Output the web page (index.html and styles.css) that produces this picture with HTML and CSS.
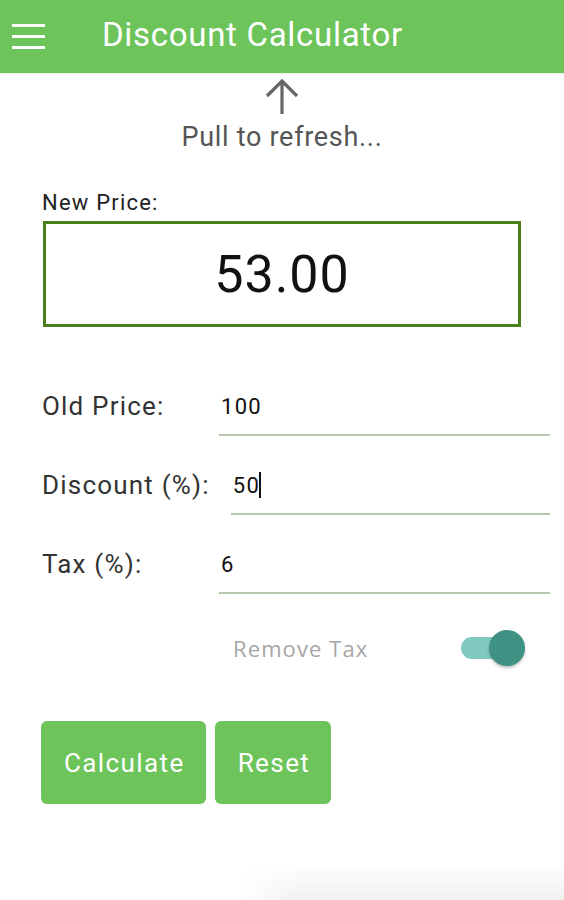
FILE: index.html
```html
<!DOCTYPE html>
<html lang="en">
<head>
  <meta charset="UTF-8" />
  <meta name="viewport" content="width=device-width, initial-scale=1.0"/>
  <title>Discount Calculator</title>
  <link rel="stylesheet" href="styles.css">
</head>
<body>

  <header class="toolbar">
    <div class="menu">
      <span></span><span></span><span></span>
    </div>
    <h1>Discount Calculator</h1>
  </header>

  <div class="refresh">
    <svg width="40" height="38" viewBox="0 0 40 38">
      <path d="M20 36 V4 M5 18 L20 3 L35 18" fill="none" stroke="#666" stroke-width="3.2"/>
    </svg>
    <div class="refresh-text">Pull to refresh...</div>
  </div>

  <main class="calc">
    <div class="result-label">New Price:</div>
    <div class="result">53.00</div>

    <div class="inputs">
      <div class="row">
        <span class="label">Old Price:</span>
        <span class="field">100</span>
      </div>
      <div class="row">
        <span class="label">Discount (%):</span>
        <span class="field"><span>50</span><span class="caret"></span></span>
      </div>
      <div class="row">
        <span class="label">Tax (%):</span>
        <span class="field">6</span>
      </div>
    </div>

    <div class="tax-row">
      <span class="tax-label">Remove Tax</span>
      <span class="switch"><span class="thumb"></span></span>
    </div>

    <div class="actions">
      <button>Calculate</button>
      <button>Reset</button>
    </div>
  </main>

  <div class="shade"></div>

</body>
</html>
```

FILE: styles.css
```css
body {
  font-family: Roboto, "Liberation Sans", sans-serif;
  background: #fff;
  margin: 0;
  width: 564px;
  height: 900px;
  overflow: hidden;
  display: flex;
  flex-direction: column;
}
.toolbar {
  height: 73px;
  flex-shrink: 0;
  background: #6cc45a;
  display: flex;
  align-items: center;
  box-shadow: 0 1px 1px rgba(0,0,0,0.08);
}
.menu {
  width: 33px;
  margin-left: 12px;
  display: flex;
  flex-direction: column;
  gap: 8px;
}
.menu span {
  height: 3px;
  background: #fff;
}
.toolbar h1 {
  margin: 0 0 0 57px;
  font-size: 33px;
  letter-spacing: 0.7px;
  font-weight: 400;
  color: #fff;
  padding-bottom: 4px;
}
.refresh {
  display: flex;
  flex-direction: column;
  align-items: center;
  padding-top: 5px;
}
.refresh svg {
  display: block;
}
.refresh-text {
  font-size: 27px;
  letter-spacing: 0.7px;
  color: #555;
  margin-top: 5px;
}
.calc {
  padding: 0 14px 0 42px;
}
.result-label {
  margin-top: 37px;
  font-size: 22px;
  letter-spacing: 1.2px;
  color: #222;
}
.result {
  margin: 6px 0 0 1px;
  width: 472px;
  height: 100px;
  border: 3px solid #4a7f1c;
  display: flex;
  align-items: center;
  justify-content: center;
  font-size: 52px;
  letter-spacing: 1px;
  color: #111;
}
.inputs {
  margin-top: 52px;
}
.row {
  display: flex;
  align-items: flex-start;
  height: 79px;
}
.label {
  min-width: 177px;
  box-sizing: border-box;
  padding-right: 21px;
  padding-top: 12px;
  font-size: 26px;
  letter-spacing: 1.2px;
  color: #333;
}
.field {
  flex: 1;
  height: 57px;
  box-sizing: border-box;
  padding: 15px 0 0 2px;
  border-bottom: 2px solid #b6c9ae;
  font-size: 22px;
  letter-spacing: 1.3px;
  color: #111;
  display: flex;
  align-items: flex-start;
}
.caret {
  width: 2px;
  height: 26px;
  margin: -1px 0 0 -1px;
  background: #111;
}
.tax-row {
  display: flex;
  align-items: center;
  justify-content: space-between;
  margin-left: 191px;
  margin-right: 35px;
  height: 50px;
  margin-top: 7px;
}
.tax-label {
  font-family: "Open Sans", Roboto, sans-serif;
  font-size: 22px;
  letter-spacing: 1.1px;
  color: #a6a6a6;
}
.switch {
  width: 54px;
  height: 22px;
  border-radius: 11px;
  background: #80c9c1;
  display: flex;
  align-items: center;
  justify-content: flex-end;
}
.thumb {
  width: 36px;
  height: 36px;
  border-radius: 50%;
  background: #3f9184;
  margin-right: -10px;
  box-shadow: 0 2px 3px rgba(0,0,0,0.25);
}
.actions {
  display: flex;
  gap: 9px;
  margin-top: 48px;
  margin-left: -1px;
}
button {
  height: 83px;
  padding: 0 21px 0 23px;
  font-family: Roboto, "Liberation Sans", sans-serif;
  font-size: 26px;
  letter-spacing: 1.4px;
  background: #6cc45a;
  color: #fff;
  border: none;
  border-radius: 6px;
}
.shade {
  margin-top: auto;
  height: 36px;
  flex-shrink: 0;
  background: linear-gradient(to bottom, rgba(0,0,0,0), rgba(0,0,0,0.06));
  -webkit-mask-image: linear-gradient(to right, transparent 240px, #000 300px);
  mask-image: linear-gradient(to right, transparent 240px, #000 300px);
}
```
